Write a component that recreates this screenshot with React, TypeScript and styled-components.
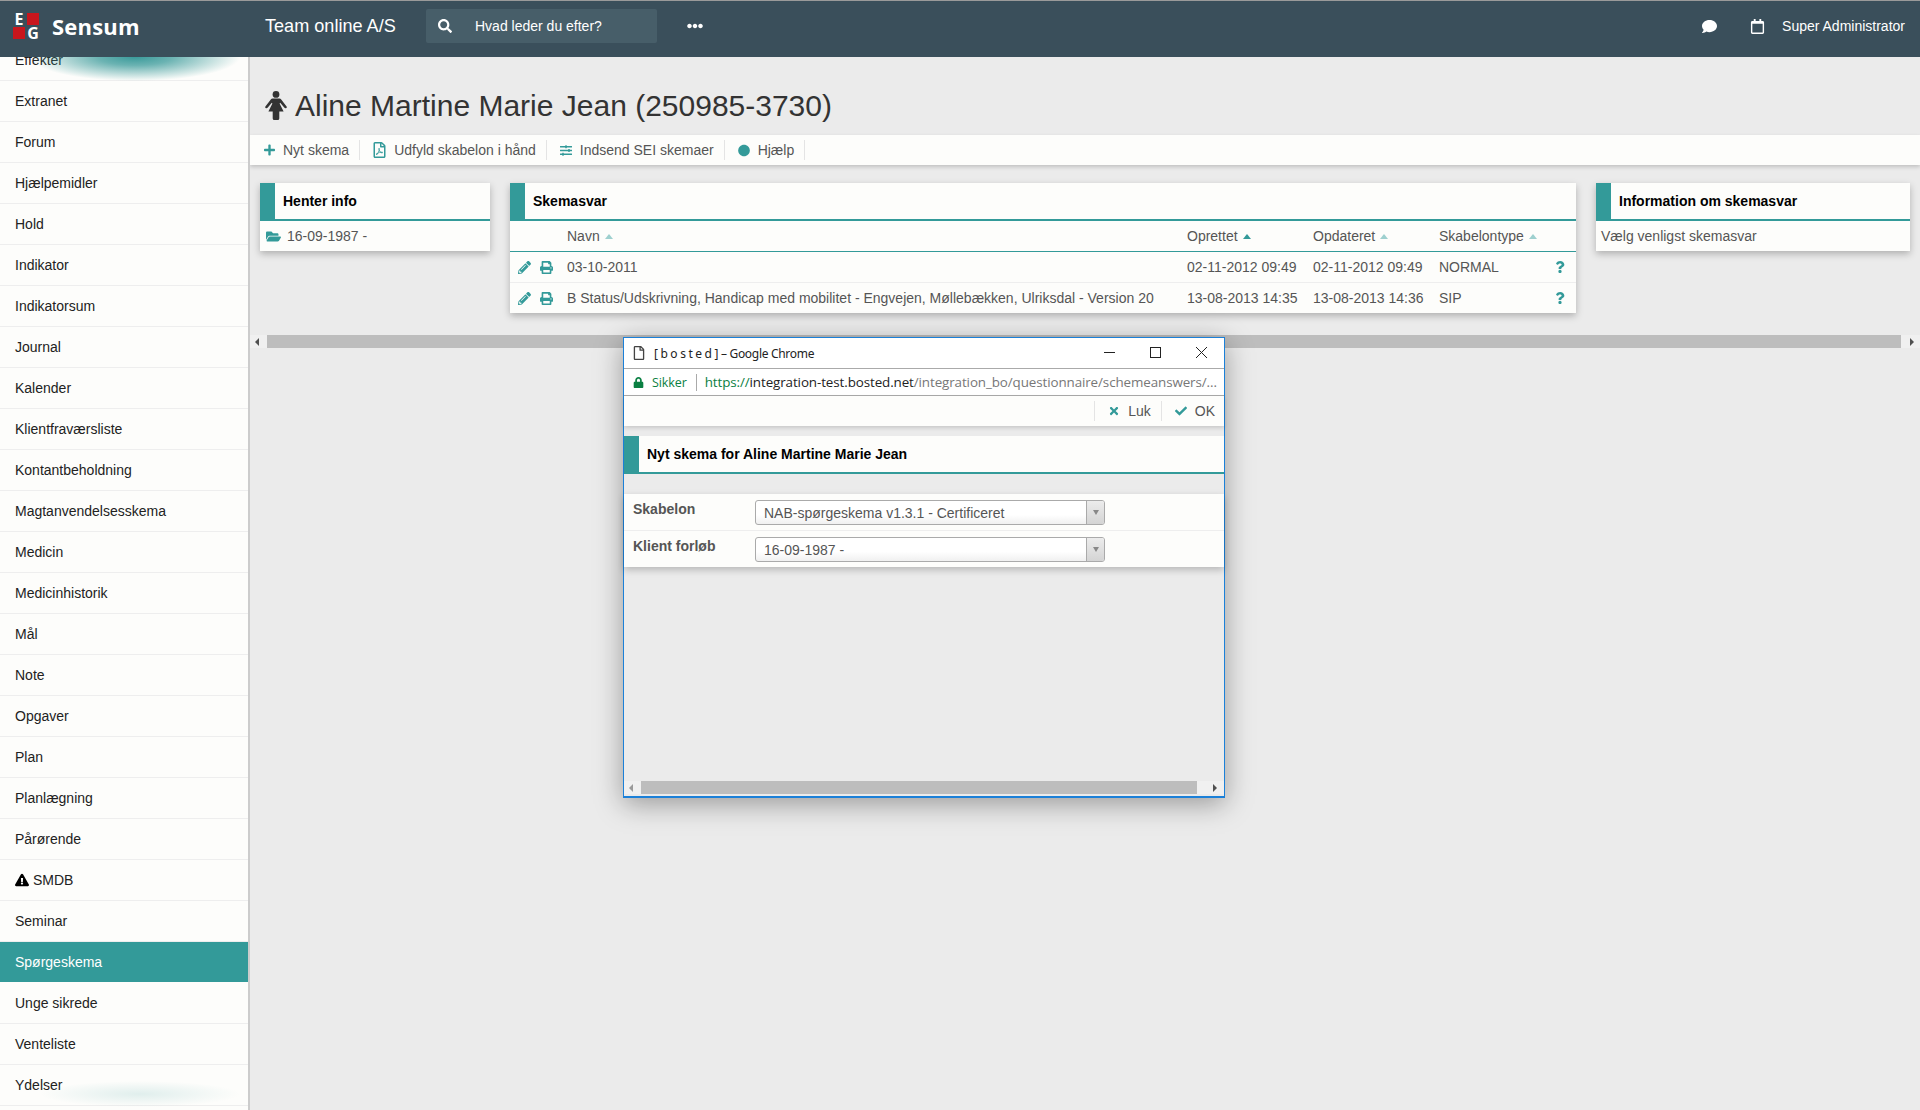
import styled, { createGlobalStyle } from 'styled-components'
import {
  FaCheck,
  FaCircle,
  FaComment,
  FaEllipsisH,
  FaExclamationTriangle,
  FaFolderOpen,
  FaLock,
  FaPencilAlt,
  FaPlus,
  FaPrint,
  FaQuestion,
  FaRegCalendar,
  FaRegFile,
  FaRegFilePdf,
  FaSearch,
  FaSlidersH,
  FaTimes,
} from 'react-icons/fa'

const teal = '#339a99'
const paper = '#fdfdfb'
const grey = '#ebebeb'

const GlobalStyle = createGlobalStyle`
  html, body {
    margin: 0;
    padding: 0;
    height: 1110px;
    overflow: hidden;
    background: ${grey};
    font-family: "Liberation Sans", Arial, sans-serif;
    font-size: 14px;
    color: #555;
  }
  * { box-sizing: border-box; }
`

const Page = styled.div`
  position: relative;
  height: 1110px;
  display: flex;
  flex-direction: column;
`

const TopBar = styled.header`
  height: 57px;
  flex: none;
  display: flex;
  align-items: center;
  padding-bottom: 6px;
  background: #3a4f5b;
  border-top: 1px solid #9a9a9a;
  color: #fff;
  position: relative;
  z-index: 2;
`

const Logo = styled.div`
  display: flex;
  align-items: center;
  gap: 13px;
  width: 265px;
  padding-left: 13px;
`

const LogoMark = styled.div`
  width: 26px;
  height: 26px;
  display: grid;
  grid-template-columns: 12px 12px;
  grid-template-rows: 12px 12px;
  gap: 2px;
`

const LogoCell = styled.span<{ $red?: boolean }>`
  display: flex;
  align-items: center;
  justify-content: center;
  background: ${(p) => (p.$red ? '#c8161d' : 'transparent')};
  font-family: "Open Sans", sans-serif;
  font-weight: 700;
  font-size: 16px;
  line-height: 12px;
`

const LogoName = styled.span`
  font-family: "Open Sans", sans-serif;
  font-weight: 700;
  font-size: 22px;
  letter-spacing: 0.2px;
`

const TeamName = styled.span`
  font-size: 18.1px;
  width: 161px;
`

const Search = styled.div`
  width: 231px;
  height: 34px;
  display: flex;
  align-items: center;
  gap: 23px;
  padding-left: 12px;
  background: #475e69;
  border-radius: 2px;
  font-size: 14px;
`

const Dots = styled.span`
  display: flex;
  margin-left: 30px;
  font-size: 16px;
`

const TopRight = styled.div`
  margin-left: auto;
  display: flex;
  align-items: center;
  padding-right: 15px;
  font-size: 14px;
`

const ChatSlot = styled.span`
  display: flex;
  font-size: 15px;
  margin-right: 33px;
`

const CalendarSlot = styled.span`
  display: flex;
  font-size: 15px;
  margin-right: 17px;
`

const Body = styled.div`
  flex: 1;
  display: flex;
  min-height: 0;
`

const Sidebar = styled.nav`
  width: 250px;
  flex: none;
  position: relative;
  overflow: hidden;
  background: ${paper};
  border-right: 2px solid #ccc;
`

const MenuList = styled.ul`
  list-style: none;
  margin: -17px 0 0;
  padding: 0;
`

const MenuItem = styled.li<{ $active?: boolean }>`
  height: 41px;
  display: flex;
  align-items: center;
  gap: 4px;
  padding-left: 15px;
  font-size: 14px;
  color: ${(p) => (p.$active ? '#fff' : '#222')};
  background: ${(p) => (p.$active ? teal : 'transparent')};
  border-bottom: 1px solid ${(p) => (p.$active ? paper : '#eee')};
`

const GlowTop = styled.div`
  position: absolute;
  left: 30px;
  top: -24px;
  width: 210px;
  height: 48px;
  background: radial-gradient(ellipse closest-side, #3a9a9a 0%, rgba(58, 154, 154, 0.75) 35%, rgba(58, 154, 154, 0) 100%);
`

const GlowBottom = styled.div`
  position: absolute;
  left: 40px;
  bottom: 3px;
  width: 200px;
  height: 26px;
  background: radial-gradient(ellipse closest-side, rgba(58, 154, 154, 0.15) 0%, rgba(58, 154, 154, 0) 100%);
`

const Main = styled.main`
  flex: 1;
  min-width: 0;
  display: flex;
  flex-direction: column;
`

const PageTitle = styled.h1`
  height: 78px;
  margin: 0;
  padding: 19px 0 0 15px;
  display: flex;
  align-items: center;
  gap: 8px;
  font-size: 30px;
  font-weight: 400;
  color: #333;
`

const Toolbar = styled.div`
  height: 30px;
  display: flex;
  align-items: center;
  padding-left: 1px;
  background: ${paper};
  box-shadow: 0 2px 4px rgba(0, 0, 0, 0.18);
`

const ToolItem = styled.span`
  height: 20px;
  display: flex;
  align-items: center;
  gap: 8px;
  padding: 0 10px 0 13px;
  border-right: 1px solid #e4e4e4;
  color: #555;
  white-space: nowrap;
`

const ToolIcon = styled.span<{ $width: number; $size: number }>`
  width: ${(p) => p.$width}px;
  display: flex;
  justify-content: center;
  color: ${teal};
  font-size: ${(p) => p.$size}px;
`

const Panels = styled.div`
  display: flex;
  align-items: flex-start;
  gap: 20px;
  padding: 18px 10px 0;
  margin-bottom: 22px;
`

const Panel = styled.section<{ $width: number }>`
  width: ${(p) => p.$width}px;
  flex: none;
  background: ${paper};
  box-shadow: 0 3px 7px rgba(0, 0, 0, 0.25);
`

const PanelHead = styled.h2`
  height: 38px;
  margin: 0;
  display: flex;
  align-items: center;
  padding-left: 8px;
  border-left: 15px solid ${teal};
  border-bottom: 2px solid ${teal};
  font-size: 14px;
  font-weight: 700;
  color: #000;
`

const PanelBody = styled.div<{ $pad: number }>`
  height: 30px;
  display: flex;
  align-items: center;
  gap: 6px;
  padding-left: ${(p) => p.$pad}px;
  svg { color: ${teal}; font-size: 15px; }
`

const TableRow = styled.div<{ $head?: boolean; $last?: boolean }>`
  height: ${(p) => (p.$last ? 30 : 31)}px;
  display: grid;
  grid-template-columns: 57px 620px 126px 126px 111px 26px;
  align-items: center;
  border-bottom: ${(p) => (p.$last ? 'none' : `1px solid ${p.$head ? teal : '#eee'}`)};
  white-space: nowrap;
`

const RowIcons = styled.span`
  display: flex;
  align-items: center;
  gap: 9px;
  padding-left: 8px;
  color: ${teal};
  font-size: 13px;
`

const Help = styled.span`
  display: flex;
  padding-left: 4px;
  color: ${teal};
  font-size: 12px;
`

const SortMark = styled.span<{ $on?: boolean }>`
  display: inline-block;
  margin-left: 5px;
  vertical-align: 2px;
  border-left: 4px solid transparent;
  border-right: 4px solid transparent;
  border-bottom: 5px solid ${(p) => (p.$on ? teal : '#9ed0cf')};
`

const ScrollTrack = styled.div`
  height: 13px;
  display: flex;
  align-items: center;
  background: #f0f0f0;
`

const ScrollThumb = styled.div`
  flex: 1;
  height: 13px;
  background: #bdbdbd;
`

const ScrollArrow = styled.span<{ $dir: 'left' | 'right'; $width: number; $dim?: boolean; $nudge?: number }>`
  width: ${(p) => p.$width}px;
  flex: none;
  display: flex;
  justify-content: center;
  padding-left: ${(p) => p.$nudge ?? 0}px;
  padding-right: ${(p) => (p.$dir === 'left' ? 3 : 0)}px;
  &::before {
    content: '';
    border-top: 4px solid transparent;
    border-bottom: 4px solid transparent;
    ${(p) => (p.$dir === 'left' ? 'border-right' : 'border-left')}: 4px solid ${(p) => (p.$dim ? '#9a9a9a' : '#505050')};
  }
`

const ChromeWindow = styled.div`
  position: absolute;
  left: 623px;
  top: 337px;
  width: 602px;
  height: 461px;
  display: flex;
  flex-direction: column;
  border: 1px solid #1b80d8;
  border-bottom-width: 2px;
  background: ${grey};
  box-shadow: 0 6px 26px rgba(0, 0, 0, 0.35);
`

const ChromeTitle = styled.div`
  height: 31px;
  flex: none;
  display: flex;
  align-items: center;
  padding-left: 8px;
  background: #fff;
  border-bottom: 1px solid #aaa;
  font-family: "Noto Sans", sans-serif;
  font-size: 12px;
  letter-spacing: -0.3px;
  color: #222;
`

const DocIcon = styled.span`
  display: flex;
  margin-right: 8px;
  font-size: 14px;
  color: #444;
`

const WindowButtons = styled.div`
  margin-left: auto;
  display: flex;
  align-items: center;
  gap: 35px;
  padding: 0 17px 2px 0;
`

const AddressBar = styled.div`
  height: 27px;
  flex: none;
  display: flex;
  align-items: center;
  padding-left: 9px;
  background: #fff;
  border-bottom: 1px solid #aaa;
  font-family: "Open Sans", sans-serif;
  font-size: 12.5px;
  white-space: nowrap;
  overflow: hidden;
  letter-spacing: -0.1px;
`

const Secure = styled.span`
  display: flex;
  align-items: center;
  gap: 8px;
  padding-right: 9px;
  margin-right: 8px;
  border-right: 1px solid #aaa;
  color: #0b8043;
  svg { font-size: 11px; }
`

const UrlText = styled.span`
  font-size: 13.4px;
`

const UrlScheme = styled.span`
  color: #0b8043;
`

const UrlHost = styled.span`
  color: #222;
`

const UrlPath = styled.span`
  color: #777;
`

const DialogBar = styled.div`
  height: 30px;
  flex: none;
  display: flex;
  align-items: center;
  justify-content: flex-end;
  padding-right: 9px;
  background: ${paper};
  box-shadow: 0 2px 4px rgba(0, 0, 0, 0.15);
  margin-bottom: 10px;
`

const DialogAction = styled.span<{ $first?: boolean }>`
  height: 20px;
  display: flex;
  align-items: center;
  gap: 8px;
  padding-left: 13px;
  padding-right: ${(p) => (p.$first ? 10 : 0)}px;
  border-left: 1px solid #e4e4e4;
  color: #555;
  svg { color: ${teal}; font-size: 12px; }
`

const DialogHead = styled(PanelHead)`
  flex: none;
  background: ${paper};
`

const FormBox = styled.div`
  margin-top: 20px;
  flex: none;
  background: ${paper};
  box-shadow: 0 3px 7px rgba(0, 0, 0, 0.22);
`

const FormRow = styled.div<{ $last?: boolean }>`
  height: ${(p) => (p.$last ? 36 : 37)}px;
  display: grid;
  grid-template-columns: 131px 350px;
  align-items: center;
  border-bottom: ${(p) => (p.$last ? 'none' : '1px solid #eee')};
`

const FormLabel = styled.label`
  padding: 0 0 7px 9px;
  font-weight: 700;
  color: #555;
`

const FakeSelect = styled.div`
  height: 25px;
  display: flex;
  align-items: center;
  justify-content: space-between;
  padding-left: 8px;
  border: 1px solid #aaa;
  border-radius: 3px;
  background: linear-gradient(#fff 60%, #f0f0f0);
  color: #555;
`

const SelectText = styled.span`
  padding-top: 1px;
`

const SelectArrow = styled.span`
  width: 18px;
  height: 100%;
  display: flex;
  align-items: center;
  justify-content: center;
  background: linear-gradient(#ececec, #d4d4d4);
  border-left: 1px solid #aaa;
  border-radius: 0 2px 2px 0;
  &::before {
    content: '';
    border-left: 3px solid transparent;
    border-right: 3px solid transparent;
    border-top: 5px solid #888;
  }
`

const WindowScroll = styled(ScrollTrack)`
  margin-top: auto;
  margin-bottom: 2px;
`

const sideMenu = [
  'Effekter',
  'Extranet',
  'Forum',
  'Hjælpemidler',
  'Hold',
  'Indikator',
  'Indikatorsum',
  'Journal',
  'Kalender',
  'Klientfraværsliste',
  'Kontantbeholdning',
  'Magtanvendelsesskema',
  'Medicin',
  'Medicinhistorik',
  'Mål',
  'Note',
  'Opgaver',
  'Plan',
  'Planlægning',
  'Pårørende',
  'SMDB',
  'Seminar',
  'Spørgeskema',
  'Unge sikrede',
  'Venteliste',
  'Ydelser',
]

const answers = [
  {
    name: '03-10-2011',
    created: '02-11-2012 09:49',
    updated: '02-11-2012 09:49',
    type: 'NORMAL',
  },
  {
    name: 'B Status/Udskrivning, Handicap med mobilitet - Engvejen, Møllebækken, Ulriksdal - Version 20',
    created: '13-08-2013 14:35',
    updated: '13-08-2013 14:36',
    type: 'SIP',
  },
]

// the fa5 female icon is much narrower than the one in the design
const FemaleIcon = () => (
  <svg width="22" height="29" viewBox="0 0 22 29" fill="#333">
    <circle cx="11" cy="3.4" r="3.4" />
    <path d="M7.5 7.5H14.5Q15.5 7.5 16.2 8.6L21.6 15.4Q22.3 16.8 21 17.3Q20 17.6 19.2 16.6L15.2 11.8L14.6 12.5L18.6 20.5H14.3V27.4Q14.3 29 12.6 29H9.4Q7.7 29 7.7 27.4V20.5H3.4L7.4 12.5L6.8 11.8L2.8 16.6Q2 17.6 1 17.3Q-0.3 16.8 0.4 15.4L5.8 8.6Q6.5 7.5 7.5 7.5Z" />
  </svg>
)

const MinimizeIcon = () => (
  <svg width="11" height="11" viewBox="0 0 11 11">
    <path d="M0 5.5h11" stroke="#222" />
  </svg>
)

const MaximizeIcon = () => (
  <svg width="11" height="11" viewBox="0 0 11 11">
    <rect x="0.5" y="0.5" width="10" height="10" fill="none" stroke="#222" />
  </svg>
)

const CloseIcon = () => (
  <svg width="11" height="11" viewBox="0 0 11 11">
    <path d="M0 0l11 11M11 0L0 11" stroke="#222" />
  </svg>
)

export default function App() {
  return (
    <Page>
      <GlobalStyle />
      <TopBar>
        <Logo>
          <LogoMark>
            <LogoCell>E</LogoCell>
            <LogoCell $red />
            <LogoCell $red />
            <LogoCell>G</LogoCell>
          </LogoMark>
          <LogoName>Sensum</LogoName>
        </Logo>
        <TeamName>Team online A/S</TeamName>
        <Search>
          <FaSearch size={14} />
          Hvad leder du efter?
        </Search>
        <Dots>
          <FaEllipsisH />
        </Dots>
        <TopRight>
          <ChatSlot>
            <FaComment />
          </ChatSlot>
          <CalendarSlot>
            <FaRegCalendar />
          </CalendarSlot>
          Super Administrator
        </TopRight>
      </TopBar>

      <Body>
        <Sidebar>
          <MenuList>
            {sideMenu.map((item) => (
              <MenuItem key={item} $active={item === 'Spørgeskema'}>
                {item === 'SMDB' && <FaExclamationTriangle size={14} color="#000" />}
                {item}
              </MenuItem>
            ))}
          </MenuList>
          <GlowTop />
          <GlowBottom />
        </Sidebar>

        <Main>
          <PageTitle>
            <FemaleIcon />
            Aline Martine Marie Jean (250985-3730)
          </PageTitle>

          <Toolbar>
            <ToolItem>
              <ToolIcon $width={11} $size={14}>
                <FaPlus />
              </ToolIcon>
              Nyt skema
            </ToolItem>
            <ToolItem>
              <ToolIcon $width={13} $size={16}>
                <FaRegFilePdf />
              </ToolIcon>
              Udfyld skabelon i hånd
            </ToolItem>
            <ToolItem>
              <ToolIcon $width={12} $size={13}>
                <FaSlidersH />
              </ToolIcon>
              Indsend SEI skemaer
            </ToolItem>
            <ToolItem>
              <ToolIcon $width={12} $size={13}>
                <FaCircle />
              </ToolIcon>
              Hjælp
            </ToolItem>
          </Toolbar>

          <Panels>
            <Panel $width={230}>
              <PanelHead>Henter info</PanelHead>
              <PanelBody $pad={6}>
                <FaFolderOpen />
                16-09-1987 -
              </PanelBody>
            </Panel>

            <Panel $width={1066}>
              <PanelHead>Skemasvar</PanelHead>
              <TableRow $head>
                <span />
                <span>
                  Navn
                  <SortMark />
                </span>
                <span>
                  Oprettet
                  <SortMark $on />
                </span>
                <span>
                  Opdateret
                  <SortMark />
                </span>
                <span>
                  Skabelontype
                  <SortMark />
                </span>
                <span />
              </TableRow>
              {answers.map((row, i) => (
                <TableRow key={row.name} $last={i === answers.length - 1}>
                  <RowIcons>
                    <FaPencilAlt />
                    <FaPrint />
                  </RowIcons>
                  <span>{row.name}</span>
                  <span>{row.created}</span>
                  <span>{row.updated}</span>
                  <span>{row.type}</span>
                  <Help>
                    <FaQuestion />
                  </Help>
                </TableRow>
              ))}
            </Panel>

            <Panel $width={314}>
              <PanelHead>Information om skemasvar</PanelHead>
              <PanelBody $pad={5}>Vælg venligst skemasvar</PanelBody>
            </Panel>
          </Panels>

          <ScrollTrack>
            <ScrollArrow $dir="left" $width={17} />
            <ScrollThumb />
            <ScrollArrow $dir="right" $width={19} $nudge={3} />
          </ScrollTrack>
        </Main>
      </Body>

      <ChromeWindow>
        <ChromeTitle>
          <DocIcon>
            <FaRegFile />
          </DocIcon>
          [ b o s t e d ] – Google Chrome
          <WindowButtons>
            <MinimizeIcon />
            <MaximizeIcon />
            <CloseIcon />
          </WindowButtons>
        </ChromeTitle>
        <AddressBar>
          <Secure>
            <FaLock />
            Sikker
          </Secure>
          <UrlText>
            <UrlScheme>https://</UrlScheme>
            <UrlHost>integration-test.bosted.net</UrlHost>
            <UrlPath>/integration_bo/questionnaire/schemeanswers/...</UrlPath>
          </UrlText>
        </AddressBar>
        <DialogBar>
          <DialogAction $first>
            <FaTimes />
            Luk
          </DialogAction>
          <DialogAction>
            <FaCheck />
            OK
          </DialogAction>
        </DialogBar>
        <DialogHead>Nyt skema for Aline Martine Marie Jean</DialogHead>
        <FormBox>
          <FormRow>
            <FormLabel>Skabelon</FormLabel>
            <FakeSelect>
              <SelectText>NAB-spørgeskema v1.3.1 - Certificeret</SelectText>
              <SelectArrow />
            </FakeSelect>
          </FormRow>
          <FormRow $last>
            <FormLabel>Klient forløb</FormLabel>
            <FakeSelect>
              <SelectText>16-09-1987 -</SelectText>
              <SelectArrow />
            </FakeSelect>
          </FormRow>
        </FormBox>
        <WindowScroll>
          <ScrollArrow $dir="left" $width={17} $dim />
          <ScrollThumb />
          <ScrollArrow $dir="right" $width={27} $nudge={9} />
        </WindowScroll>
      </ChromeWindow>
    </Page>
  )
}
